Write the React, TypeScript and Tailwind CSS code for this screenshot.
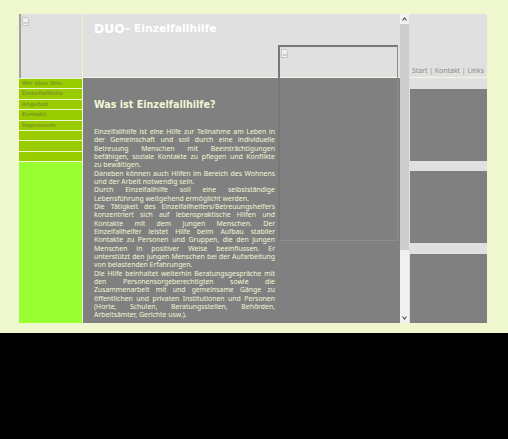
import React from 'react';

const menu = ['Wir über Uns', 'Einzelfallhilfe', 'Angebot', 'Kontakt', 'Impressum', '', '', ''];

// lines are broken by hand, last one of each paragraph stays left aligned
const paragraphs = [
  [
    'Einzelfallhilfe ist eine Hilfe zur Teilnahme am Leben in',
    'der Gemeinschaft und soll durch eine individuelle',
    'Betreuung Menschen mit Beeinträchtigungen',
    'befähigen, soziale Kontakte zu pflegen und Konflikte',
    'zu bewältigen.',
  ],
  ['Daneben können auch Hilfen im Bereich des Wohnens', 'und der Arbeit notwendig sein.'],
  ['Durch Einzelfallhilfe soll eine selbstständige', 'Lebensführung weitgehend ermöglicht werden.'],
  [
    'Die Tätigkeit des Einzelfallhelfers/Betreuungshelfers',
    'konzentriert sich auf lebenspraktische Hilfen und',
    'Kontakte mit dem jungen Menschen. Der',
    'Einzelfallhelfer leistet Hilfe beim Aufbau stabiler',
    'Kontakte zu Personen und Gruppen, die den jungen',
    'Menschen in positiver Weise beeinflussen. Er',
    'unterstützt den jungen Menschen bei der Aufarbeitung',
    'von belastenden Erfahrungen.',
  ],
  [
    'Die Hilfe beinhaltet weiterhin Beratungsgespräche mit',
    'den Personensorgeberechtigten sowie die',
    'Zusammenarbeit mit und gemeinsame Gänge zu',
    'öffentlichen und privaten Institutionen und Personen',
    '(Horte, Schulen, Beratungsstellen, Behörden,',
    'Arbeitsämter, Gerichte usw.).',
  ],
];

// placeholder the browser shows for a missing image
const BrokenImage = () => (
  <svg width="7" height="9" viewBox="0 0 7 9" className="block">
    <path d="M0.5 0.5H4.5L6.5 2.5V8.5H0.5Z" fill="#f0f0f0" stroke="#c4c4c4" />
    <rect x="1.5" y="5" width="4" height="2" fill="#c8d0c8" />
  </svg>
);

export default function App() {
  return (
    <div className="h-[439px] w-[508px] overflow-hidden bg-black font-['DejaVu_Sans',sans-serif]">
      <div className="h-[333px] bg-[#eff7cf] pl-[19px] pt-[14px]">
        <div className="flex h-[309px] w-[468px]">
          {/* left column */}
          <div className="flex w-[63px] flex-col">
            <div className="h-[64px] border-l-2 border-[#a0a0a0] bg-[#e0e0e0] pb-[1px] pl-[1px] pt-[3px]">
              <BrokenImage />
            </div>
            <div className="flex flex-col pt-[1px]">
              {menu.map((item, i) => (
                <div
                  key={i}
                  className="mb-[1px] flex h-[9.4px] items-center bg-[#99cc00] pl-[3px] text-[5.4px] font-bold leading-none text-[#7f9a20]"
                >
                  {item}
                </div>
              ))}
            </div>
            <div className="flex-1 bg-[#99ff33]" />
          </div>

          {/* main column */}
          <div className="relative ml-[1px] flex w-[317px] flex-col">
            <div className="flex h-[64px] items-start gap-[4px] border-b border-[#f4f6e4] bg-[#e0e0e0] pl-[11px] pt-[6px] font-bold leading-[18px] text-white">
              <span className="text-[12.3px]">DUO-</span>
              <span className="text-[10.8px]">Einzelfallhilfe</span>
            </div>
            <div className="flex-1 overflow-hidden bg-[#808080] pl-[11px] text-[#f0f7d4]">
              <h1 className="mt-[19px] text-[9.6px] font-bold leading-[16px]">Was ist Einzelfallhilfe?</h1>
              <div className="mt-[15px] w-[181px] font-['Noto_Sans',sans-serif] text-[6.9px] leading-[8.33px]">
                {paragraphs.map((lines, i) => (
                  <p key={i}>
                    {lines.map((line, j) => (
                      <span
                        key={j}
                        className={
                          j === lines.length - 1
                            ? 'block whitespace-nowrap'
                            : 'block whitespace-nowrap text-justify [text-align-last:justify]'
                        }
                      >
                        {line}
                      </span>
                    ))}
                  </p>
                ))}
              </div>
            </div>
            {/* floating frame over the text */}
            <div className="absolute left-[195px] top-[31px] h-[196px] w-[120px] border border-l-2 border-t-2 border-[#777] border-b-[#8e8e8e] border-r-[#8e8e8e] pl-[1px] pt-[2px]">
              <BrokenImage />
            </div>
          </div>

          {/* scrollbar */}
          <div className="flex w-[9px] flex-col bg-[#f1f1f1]">
            <div className="flex h-[10px] items-center justify-center">
              <svg width="5" height="4" viewBox="0 0 5 4">
                <path d="M0.5 3.5L2.5 1L4.5 3.5" fill="none" stroke="#505050" strokeWidth="1.2" />
              </svg>
            </div>
            <div className="h-[226px] bg-[#cdcdcd]" />
            <div className="flex-1" />
            <div className="flex h-[10px] items-center justify-center">
              <svg width="5" height="4" viewBox="0 0 5 4">
                <path d="M0.5 0.5L2.5 3L4.5 0.5" fill="none" stroke="#505050" strokeWidth="1.2" />
              </svg>
            </div>
          </div>

          {/* right column */}
          <div className="flex w-[78px] flex-col bg-[#e0e0e0] pl-[1px]">
            <div className="flex h-[64px] items-end whitespace-nowrap border-b border-[#f4f6e4] pb-[1px] pl-[2px] font-['Noto_Sans',sans-serif] text-[6.9px] leading-[10px] text-[#8c8c8c]">
              Start | Kontakt | Links
            </div>
            <div className="mt-[11px] h-[72px] bg-[#808080]" />
            <div className="mt-[10px] h-[72px] bg-[#808080]" />
            <div className="mt-[11px] flex-1 bg-[#808080]" />
          </div>
        </div>
      </div>
    </div>
  );
}
